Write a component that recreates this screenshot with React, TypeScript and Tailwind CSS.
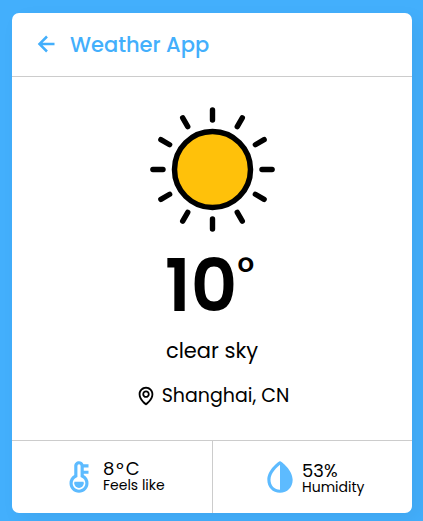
import React from "react";
import { BiLeftArrowAlt, BiMap, BiSolidDropletHalf, BiSolidThermometer } from "react-icons/bi";

const RAYS = Array.from({ length: 12 }, (_, i) => i * 30);

function Sun() {
  return (
    <svg viewBox="0 0 125 125" className="size-[125px]" aria-label="Sunny">
      <circle cx="62.5" cy="62.5" r="38" fill="#ffc10a" stroke="#000" strokeWidth="5.5" />
      {RAYS.map((angle) => (
        <line
          key={angle}
          x1="62.5"
          y1="2.9"
          x2="62.5"
          y2="13"
          stroke="#000"
          strokeWidth="5.4"
          strokeLinecap="round"
          transform={`rotate(${angle} 62.5 62.5)`}
        />
      ))}
    </svg>
  );
}

export default function App() {
  return (
    <div className="h-[521px] w-[423px] overflow-hidden bg-[#43affc] pt-[13px] pl-3 font-[Poppins,Inter,sans-serif] text-black">
      <section className="flex h-[500px] w-[400px] flex-col rounded-[7px] bg-white shadow-[7px_7px_20px_rgba(0,0,0,0.05)]">
        <header className="flex h-16 items-center border-b border-[#ccc] pb-px pl-5 text-[#43affc]">
          <BiLeftArrowAlt className="size-[30px]" />
          <h1 className="ml-2 pt-0.5 text-[21px] leading-8 font-medium whitespace-nowrap">Weather App</h1>
        </header>
        <main className="flex flex-1 flex-col items-center pt-[30px]">
          <Sun />
          <div className="mt-[18px] flex h-[72px] items-start pr-[5px]">
            <span className="text-[72px] leading-[72px] font-semibold">10</span>
            <span className="text-[40px] leading-[44px] font-medium">°</span>
          </div>
          <p className="mt-[13px] text-[21px] leading-8 whitespace-nowrap">clear sky</p>
          <p className="mt-[13px] flex items-center text-[19px] leading-8 whitespace-nowrap">
            <BiMap className="mr-[5px] size-[22px]" />
            <span>Shanghai, CN</span>
          </p>
        </main>
        <footer className="flex h-[73px] border-t border-[#ccc]">
          <div className="flex w-[201px] items-center border-r border-[#ccc] pl-12">
            <BiSolidThermometer className="size-[38px] text-[#5dbbff]" />
            <div className="ml-[5px] pb-[3px] whitespace-nowrap">
              <p className="flex items-center text-lg leading-[18px]">
                8<span className="mx-[2px]">°</span>C
              </p>
              <p className="text-sm leading-[14px]">Feels like</p>
            </div>
          </div>
          <div className="flex flex-1 items-center pl-12">
            <BiSolidDropletHalf className="size-[38px] text-[#5dbbff]" />
            <div className="ml-[3px] pt-px whitespace-nowrap">
              <p className="text-lg leading-[18px]">53%</p>
              <p className="text-sm leading-[14px]">Humidity</p>
            </div>
          </div>
        </footer>
      </section>
    </div>
  );
}
